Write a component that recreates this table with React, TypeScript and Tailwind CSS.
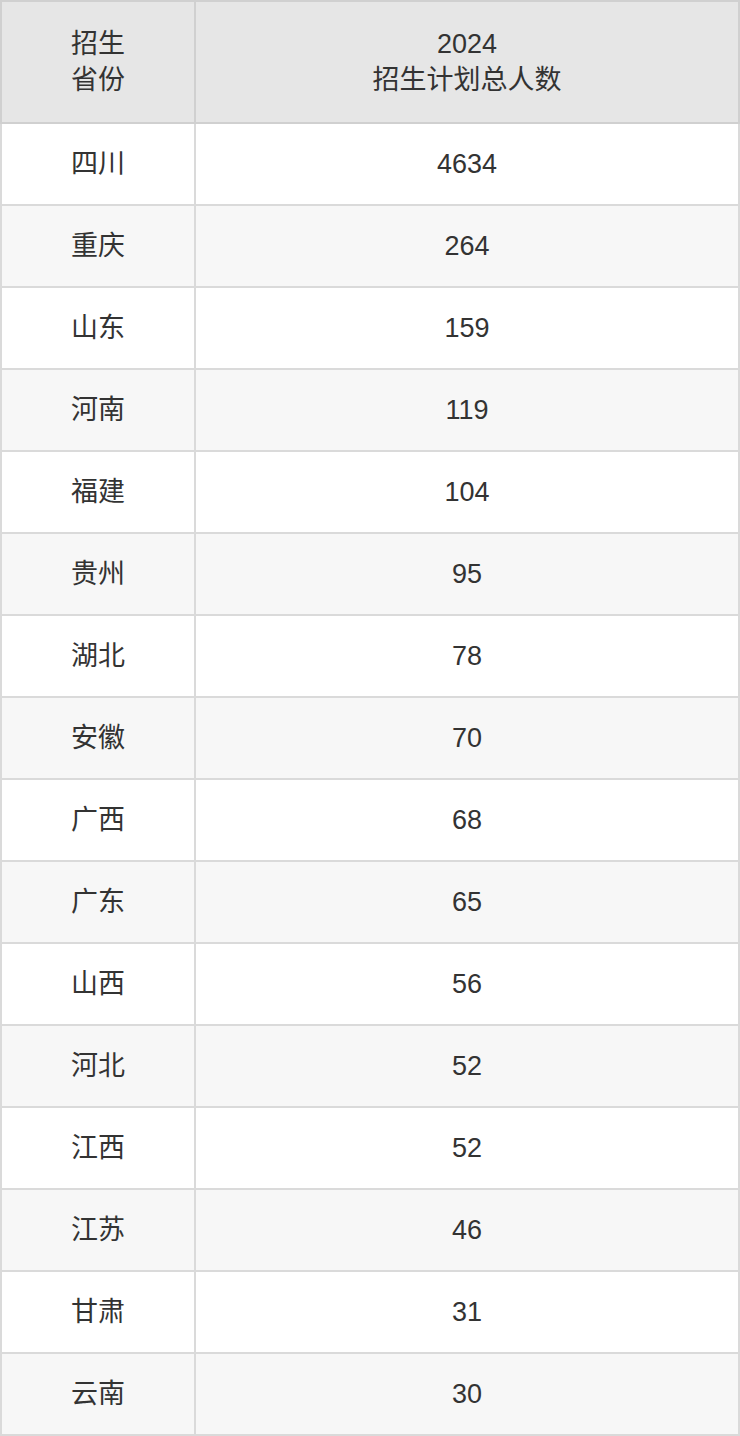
const rows: [string, number][] = [
  ["四川", 4634],
  ["重庆", 264],
  ["山东", 159],
  ["河南", 119],
  ["福建", 104],
  ["贵州", 95],
  ["湖北", 78],
  ["安徽", 70],
  ["广西", 68],
  ["广东", 65],
  ["山西", 56],
  ["河北", 52],
  ["江西", 52],
  ["江苏", 46],
  ["甘肃", 31],
  ["云南", 30],
]

export default function App() {
  return (
    <div
      className="w-[740px] bg-white text-[#333333]"
      style={{ fontFamily: '"Liberation Sans", "Noto Sans CJK SC", sans-serif' }}
    >
      <table className="w-full border-collapse border-2 border-[#d4d4d4] text-[27px] table-fixed">
        <thead>
          <tr className="h-[122px] bg-[#e6e6e6]">
            <th className="w-[194px] border-2 border-[#d0d0d0] font-normal leading-[36px] text-center">
              招生
              <br />
              省份
            </th>
            <th className="border-2 border-[#d0d0d0] font-normal leading-[36px] text-center">
              2024
              <br />
              招生计划总人数
            </th>
          </tr>
        </thead>
        <tbody>
          {rows.map(([name, n], i) => (
            <tr key={name + i} className={`h-[82px] ${i % 2 === 1 ? "bg-[#f7f7f7]" : "bg-white"}`}>
              <td className="border-2 border-[#dadada] text-center">{name}</td>
              <td className="border-2 border-[#dadada] text-center">{n}</td>
            </tr>
          ))}
        </tbody>
      </table>
    </div>
  )
}
